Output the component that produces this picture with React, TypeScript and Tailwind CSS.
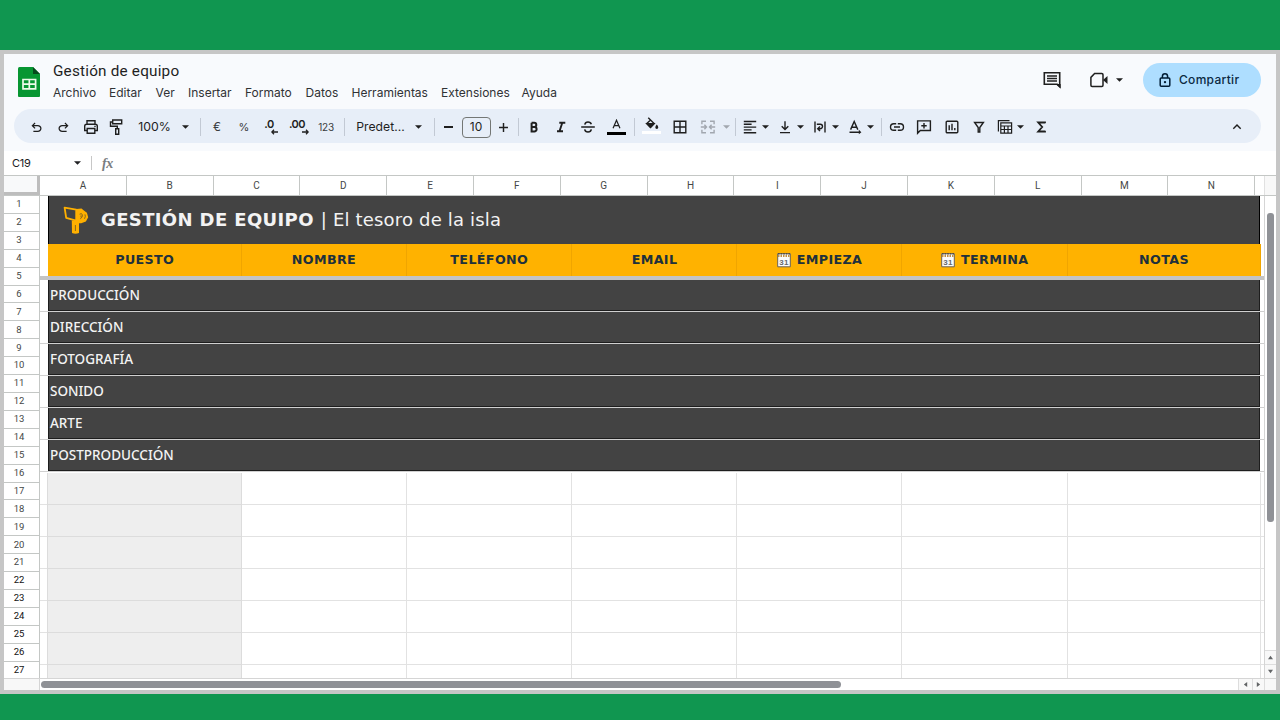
import type { ReactNode } from "react";

type P = { children?: ReactNode; className?: string };

function Sym({ d, className = "w-4 h-4" }: { d: string; className?: string }) {
  return (
    <svg viewBox="0 -960 960 960" className={`${className} shrink-0`} fill="currentColor">
      <path d={d} />
    </svg>
  );
}

function Line({ children, className = "w-4 h-4" }: P) {
  return (
    <svg viewBox="0 0 16 16" className={`${className} shrink-0`} fill="none" stroke="currentColor" strokeWidth="1.4">
      {children}
    </svg>
  );
}

function Cell({ children, className = "" }: P) {
  return <div className={`flex h-full shrink-0 items-center justify-center pt-[2px] whitespace-nowrap ${className}`}>{children}</div>;
}

function Caret() {
  return (
    <svg viewBox="0 0 8 4" className="h-[4px] w-[7px] shrink-0" fill="currentColor">
      <path d="M0 0h8L4 4z" />
    </svg>
  );
}

function Sep() {
  return <div className="h-[18px] w-px bg-[#c2c9d4]" />;
}

const undo =
  "M280-200v-80h284q63 0 109.5-40T720-420q0-60-46.5-100T564-560H312l104 104-56 56-200-200 200-200 56 56-104 104h252q97 0 167 63t70 157q0 94-70 157t-167 63H280Z";

function Decimals({ text, right }: { text: string; right?: boolean }) {
  return (
    <div className="flex flex-col items-end">
      <span className="pr-[2px] text-[11px] leading-[9px] font-semibold tracking-[-0.5px]">{text}</span>
      <svg viewBox="0 0 7 6" className="mr-[-2px] h-[6px] w-[7px]" fill="none" stroke="currentColor" strokeWidth="1.3">
        {right ? <path d="M0 3h6M4 .8 6.2 3 4 5.2" /> : <path d="M7 3H1M3 .8.8 3 3 5.2" />}
      </svg>
    </div>
  );
}

function Toolbar() {
  return (
    <div className="ml-[10px] flex h-[34px] w-[1247px] items-center rounded-full bg-[#e7eef8] pl-2 text-[12px] text-[#1f1f1f]">
      <Cell className="w-[28px]"><Sym d={undo} className="h-[15px] w-[15px]" /></Cell>
      <Cell className="w-[26px]"><Sym d={undo} className="h-[15px] w-[15px] -scale-x-100" /></Cell>
      <Cell className="w-[30px]">
        <Line><path d="M4 5V1.8h8V5M4 11.5H1.7V7.2Q1.7 5.2 3.7 5.2h8.6q2 0 2 2v4.3H12M4.2 9.5h7.6v4.7H4.2z" /><path d="M11.3 7.4h1.4" /></Line>
      </Cell>
      <Cell className="w-[22px]">
        <Line><path d="M3.7 1h9v3.8h-9zM3.7 3H1.5v4.2h6.8v2.6M6.7 9.8h3v5.4h-3z" /></Line>
      </Cell>
      <Cell className="w-[53px] pt-[3px] text-[12.3px]">100%</Cell>
      <Cell className="w-[8px]"><Caret /></Cell>
      <Cell className="w-[23px]"><Sep /></Cell>
      <Cell className="w-[10px] text-[12px] text-[#3a3c40]">€</Cell>
      <Cell className="w-[44px] pt-[3px] text-[11px] text-[#3a3c40]">%</Cell>
      <Cell className="w-[8px]"><Decimals text=".0" /></Cell>
      <Cell className="w-[48px]"><Decimals text=".00" right /></Cell>
      <Cell className="w-[8px] text-[10px] tracking-[-0.2px] text-[#3a3c40]">123</Cell>
      <Cell className="w-[28px]"><Sep /></Cell>
      <Cell className="w-[45px] pt-[3px] text-[12.2px]">Predet...</Cell>
      <Cell className="w-[30px]"><Caret /></Cell>
      <Cell className="w-[3px]"><Sep /></Cell>
      <Cell className="w-[24px]"><div className="h-[1.5px] w-[9px] bg-[#1f1f1f]" /></Cell>
      <Cell className="w-[32px]">
        <div className="flex h-[21px] w-[29px] items-center justify-center rounded-[4px] border border-[#747775] text-[12px]">10</div>
      </Cell>
      <Cell className="w-[22px]"><Line className="h-[11px] w-[11px]"><path strokeWidth="2.1" d="M8 1.5v13M1.5 8h13" /></Line></Cell>
      <Cell className="w-[8px]"><Sep /></Cell>
      <Cell className="w-[24px]">
        <Line><path strokeWidth="2" d="M5.6 3.8v8.6h2.8a2.2 2.2 0 0 0 0-4.4H5.6M5.6 3.8h2.6a2.1 2.1 0 0 1 0 4.2" /></Line>
      </Cell>
      <Cell className="w-[30px]"><Line><path strokeWidth="1.9" d="M6.3 3.8h6M4 12.3h6M9.3 3.8l-2.8 8.5" /></Line></Cell>
      <Cell className="w-[24px]">
        <Line><path strokeWidth="1.5" d="M1.2 8h13.6M11.3 5.3Q10.7 3.1 8 3.1T4.8 5.7M4.7 10.3Q5.2 13 8 13t3.3-2.7" /></Line>
      </Cell>
      <Cell className="w-[32px] flex-col">
        <Line className="h-[11px] w-[11px]"><path strokeWidth="1.8" d="M3 13.4 8 1.8l5 11.6M4.7 9.8h6.6" /></Line>
        <div className="mt-[2px] h-[3px] w-[19px] bg-black" />
      </Cell>
      <Cell className="w-[4px]"><Sep /></Cell>
      <Cell className="w-[30px] flex-col">
        <svg viewBox="0 0 16 14" className="mt-[-3px] h-[13px] w-[15px]" fill="none" stroke="currentColor" strokeWidth="1.5">
          <path d="m4.5.8 6.3 6.3-3.9 4-4-4L7 3.2" />
          <path d="M3 7.2h7.7l-3.8 4z" fill="currentColor" />
          <path d="M13.7 8.2q1.6 2 1.6 3a1.6 1.6 0 0 1-3.2 0q0-1 1.6-3z" fill="currentColor" stroke="none" />
        </svg>
        <div className="mt-[1px] h-[3px] w-[19px] bg-white" />
      </Cell>
      <Cell className="w-[28px]"><Line><path d="M2.2 2.2h11.6v11.6H2.2zM8 2.2v11.6M2.2 8h11.6" /></Line></Cell>
      <Cell className="w-[28px] text-[#a2a7af]">
        <Line><path d="M6 2.2H1.9v3M10 2.2h4.1v3M6 13.8H1.9v-3M10 13.8h4.1v-3M0.8 8H6M10 8h5.2M4.4 5.8 6.5 8l-2.1 2.2M11.6 5.8 9.5 8l2.1 2.2" /></Line>
      </Cell>
      <Cell className="w-[8px] text-[#a2a7af]"><Caret /></Cell>
      <Cell className="w-[10px]"><Sep /></Cell>
      <Cell className="w-[20px]"><Line><path d="M1.8 2.5h12.4M1.8 5.3h7.8M1.8 8.1h12.4M1.8 10.9h7.8M1.8 13.7h12.4" /></Line></Cell>
      <Cell className="w-[10px]"><Caret /></Cell>
      <Cell className="ml-1 w-[22px]"><Line><path d="M8 2.3v7.9M4.7 7.2 8 10.5l3.3-3.3M3 13.6h10" /></Line></Cell>
      <Cell className="w-[8px]"><Caret /></Cell>
      <Cell className="ml-2 w-[16px]">
        <Line><path strokeWidth="1.4" d="M3 2.5v11M13 2.5v11M4.8 5.3h3.5a2.2 2.2 0 0 1 0 4.4H6M8 7.4 5.7 9.7 8 12" /></Line>
      </Cell>
      <Cell className="w-[15px]"><Caret /></Cell>
      <Cell className="w-[24px]">
        <Line><path d="M3.6 10.6 7.2 2.4l3.6 8.2M4.8 8.2h4.8M2.5 13.3h10" /><path d="m11.8 10.7 2.6 2.6-2.6 1.9z" fill="currentColor" stroke="none" /></Line>
      </Cell>
      <Cell className="w-[7px]"><Caret /></Cell>
      <Cell className="w-[14px]"><Sep /></Cell>
      <Cell className="w-[18px]"><Line><path d="M7.2 4.7H4.8a3.3 3.3 0 0 0 0 6.6h2.4M8.8 4.7h2.4a3.3 3.3 0 0 1 0 6.6H8.8M5 8h6" /></Line></Cell>
      <Cell className="w-[36px]"><Line><path d="M1.6 14.2V1.9h12.8v9.6H4.3zM8 4v5.4M5.3 6.7h5.4" /></Line></Cell>
      <Cell className="w-[20px]"><Line><rect x="2.2" y="2.2" width="11.6" height="11.6" rx="1" /><path d="M5.2 6.3v5M8 4.8v6.5M10.8 9v2.3" /></Line></Cell>
      <Cell className="w-[34px]"><Line><path d="M3.6 3.5h8.8L8.8 8.5v4.5H7.2V8.5z" /></Line></Cell>
      <Cell className="w-[18px]">
        <Line><path strokeWidth="1.2" d="M3.8 3.9h10.8v10.2H3.8zM3.8 7h10.8M3.8 10.5h10.8M7.4 7v7.1M11 7v7.1M12.5 1.6H1.4v10.9" /></Line>
      </Cell>
      <Cell className="w-[12px]"><Caret /></Cell>
      <Cell className="w-[30px]"><Line><path strokeWidth="1.8" d="M12 4.3v-.8H5.2L9.2 8l-4 4.5H12v-.8" /></Line></Cell>
      <Cell className="mr-3 ml-auto w-[24px]"><Line><path d="M4.3 9.8 8 6.1l3.7 3.7" /></Line></Cell>
    </div>
  );
}

function Header() {
  return (
    <div className="flex h-[97px] shrink-0 flex-col bg-[#f8fafd]">
      <div className="flex h-[55px] text-[#1f1f1f]">
        <svg viewBox="0 0 22 30" className="mt-[13px] ml-[14px] h-[30px] w-[22px] shrink-0">
          <path d="M1.5 0H15l7 7v22q0 1-1 1H1q-1 0-1-1V1.5Q0 0 1.5 0z" fill="#079632" />
          <path d="m15 0 7 7h-7z" fill="#06491c" />
          <path d="M5 12.5h12.6v9.4H5zM5 17.2h12.6M11.3 12.5v9.4" fill="none" stroke="#eefbea" strokeWidth="1.7" />
        </svg>
        <div className="ml-[13px] flex flex-col">
          <div className="mt-[7px] h-[21px] font-['Roboto',sans-serif] text-[15.3px] leading-[21px] tracking-[0.2px] whitespace-nowrap">Gestión de equipo</div>
          <div className="mt-[2px] flex text-[12px] leading-[18px] text-[#303235]">
            <span className="w-[56px]">Archivo</span>
            <span className="w-[46.5px]">Editar</span>
            <span className="w-[32.5px]">Ver</span>
            <span className="w-[57px]">Insertar</span>
            <span className="w-[60.5px]">Formato</span>
            <span className="w-[46px]">Datos</span>
            <span className="w-[89.5px]">Herramientas</span>
            <span className="w-[80.5px]">Extensiones</span>
            <span>Ayuda</span>
          </div>
        </div>
        <div className="mr-[15px] ml-auto flex h-[51px] items-center">
          <svg viewBox="0 0 18 18" className="mr-[29px] h-[18px] w-[18px]" fill="none" stroke="currentColor" strokeWidth="1.6">
            <path d="M1.3 1.7h15.4v14l-2.5-2.4H1.3z" />
            <path d="M17.6 13v4.6L13 13z" fill="currentColor" stroke="none" />
            <path strokeWidth="1.5" d="M4 4.9h10M4 7.5h10M4 10.1h10" />
          </svg>
          <svg viewBox="0 0 18 16" className="mr-[8px] h-[16px] w-[18px]" fill="none" stroke="currentColor" strokeWidth="1.5">
            <path d="M4.6 1.6h7.2q1.2 0 1.2 1.2v10.4q0 1.2-1.2 1.2H2.1q-1.2 0-1.2-1.2V5.4z" />
            <path d="m13 8 4.5-4v8z" fill="currentColor" stroke="none" />
          </svg>
          <Caret />
          <div className="ml-[20px] flex h-[34px] w-[118px] items-center rounded-full bg-[#aedeff] pl-[16px]">
            <svg viewBox="0 0 12 14" className="h-[14px] w-[12px]" fill="none" stroke="#001d35" strokeWidth="1.5">
              <rect x="1.2" y="5" width="9.6" height="8.2" rx="1" />
              <path d="M3.4 5V3.4a2.6 2.6 0 0 1 5.2 0V5" />
              <circle cx="6" cy="9.1" r="1.2" fill="#001d35" stroke="none" />
            </svg>
            <span className="ml-[8px] text-[12px] font-medium tracking-[0.3px] text-[#0b2942]">Compartir</span>
          </div>
        </div>
      </div>
      <Toolbar />
    </div>
  );
}

function FormulaBar() {
  return (
    <div className="flex h-[24px] shrink-0 items-center bg-white pl-[8px] text-[11px] text-[#202124]">
      <span className="w-[62px] tracking-[-0.3px]">C19</span>
      <Caret />
      <div className="ml-[10px] h-[14px] w-px bg-[#c7c7c7]" />
      <span className="ml-[10px] font-['Liberation_Serif',serif] text-[14px] font-bold tracking-[-0.5px] text-[#7a7d80] italic">fx</span>
    </div>
  );
}

const columns = "ABCDEFGHIJKLMN".split("");

function ColumnHeads() {
  return (
    <div className="flex h-[21px] shrink-0 border-y border-[#c4c7c5] bg-white font-['Roboto',sans-serif] text-[10px] text-[#444746]">
      <div className="h-[19px] w-[36px] shrink-0 border-r-[3px] border-b-[3px] border-[#bdbdbd] bg-[#f8f9fa]" />
      {columns.map((c) => (
        <div key={c} className="flex w-[86.8px] shrink-0 items-center justify-center border-r border-[#c4c7c5]">{c}</div>
      ))}
      <div className="ml-auto w-[12px] border-l border-[#e1e1e1] bg-[#f8f8f8]" />
    </div>
  );
}

function RowHeads() {
  return (
    <div className="w-[36px] shrink-0 overflow-hidden border-r border-[#c4c7c5] bg-white font-['Roboto',sans-serif] text-[9.5px] text-[#444746]">
      {Array.from({ length: 27 }, (_, i) => (
        <div key={i} className={`flex h-[17.92px] items-center justify-center border-b border-[#c4c7c5] pr-[5px] ${i > 20 ? "text-[#111111]" : ""}`}>
          {i + 1}
        </div>
      ))}
    </div>
  );
}

function Calendar() {
  return (
    <svg viewBox="0 0 14 15" className="mr-[6px] h-[15px] w-[14px]">
      <path d="M.7.7h12.6v13.1H.7z" fill="#fbfbfb" stroke="#6a6253" />
      <path d="M1 3h12" stroke="#c08f42" strokeWidth="2" strokeDasharray="1.5 1" />
      <path d="M1 .8h12" stroke="#514b42" strokeWidth="1.4" strokeDasharray="1.6 1" />
      <text x="7" y="11.8" textAnchor="middle" fontSize="8" fill="#65686c" fontFamily="Liberation Sans">31</text>
    </svg>
  );
}

function Banner() {
  return (
    <div className="mr-px flex h-[47.5px] shrink-0 items-center border-x border-black bg-[#434343] font-['DejaVu_Sans',sans-serif] text-[18px] text-[#f3f3f3]">
      <svg viewBox="0 0 26 28" className="ml-[14px] h-[28px] w-[26px] shrink-0">
        <path d="M11 3.2 18.5 2.6l2.4 2 3 2.2 1.3 4.4-2.3 4.2-4.7 1.9H11z" fill="#ffb000" />
        <path d="M8.8 14.5h7.2V27q-3.6 1.6-7 0z" fill="#ffb000" />
        <path d="m1.6 1.7 11.6 2v11L3.2 11.9z" fill="#434343" stroke="#ffb000" strokeWidth="1.8" strokeLinejoin="round" />
        <path d="M16.6 8.2q2.4-1.5 2.8.8t-2.2 3.9M18 9.4v2M22 8.4q.9 2.2-.5 4.4M12.4 19v6" fill="none" stroke="#6b5626" strokeWidth=".8" />
      </svg>
      <div className="ml-[12px] whitespace-nowrap">
        <span className="font-bold tracking-[0.37px]">GESTIÓN DE EQUIPO</span>
        <span className="ml-[1px] tracking-[0.18px]"> | El tesoro de la isla</span>
      </div>
    </div>
  );
}

const widths = ["w-[193.5px]", "w-[165px]", "w-[165.5px]", "w-[165px]", "w-[165px]", "w-[165.5px]", "w-[193px]"];
const titles = ["PUESTO", "NOMBRE", "TELÉFONO", "EMAIL", "EMPIEZA", "TERMINA", "NOTAS"];
const groups = ["PRODUCCIÓN", "DIRECCIÓN", "FOTOGRAFÍA", "SONIDO", "ARTE", "POSTPRODUCCIÓN"];

function Sheet() {
  return (
    <div className="flex h-full w-[1225px] shrink-0 flex-col overflow-hidden border-r border-[#d5d5d5] bg-white">
      <div className="ml-[8px] flex w-[1213px] shrink-0 flex-col">
        <Banner />
        <div className="flex h-[32px] bg-[#ffb200] font-['DejaVu_Sans',sans-serif] text-[12.7px] font-bold tracking-[0.36px] text-[#20303c]">
          {titles.map((t, i) => (
            <div key={t} className={`flex shrink-0 items-center justify-center border-r border-[#f0a500] pt-px pl-px ${widths[i]}`}>
              {(i === 4 || i === 5) && <Calendar />}
              {t}
            </div>
          ))}
        </div>
      </div>
      <div className="h-[4.5px] shrink-0 bg-[#c4c4c4]" />
      {groups.map((g) => (
        <div key={g} className="flex h-[32px] shrink-0 border-b border-[#d0d0d0] pr-[4px] pl-[8px]">
          <div className="flex flex-1 items-center border border-t-0 border-[#1d1d1d] bg-[#434343] pt-px pl-[1px] font-['Noto_Sans',sans-serif] text-[13.5px] font-medium text-[#f3f3f3]">
            {g}
          </div>
        </div>
      ))}
      <div className="flex shrink-0 flex-col pt-px">
        {Array.from({ length: 7 }, (_, r) => (
          <div key={r} className="flex h-[32px] shrink-0 border-b border-[#e2e2e2] pl-[7px]">
            {widths.map((w, i) =>
              i === 0 ? (
                <div key={i} className="-mb-px w-[194.9px] shrink-0 border border-t-0 border-[#dcdcdc] bg-[#eeeeee]" />
              ) : (
                <div key={i} className={`shrink-0 border-r border-[#e2e2e2] ${w}`} />
              ),
            )}
          </div>
        ))}
      </div>
    </div>
  );
}

function Tick({ className = "" }: P) {
  return (
    <svg viewBox="0 0 6 6" className={`h-[5px] w-[5px] ${className}`} fill="#626466">
      <path d="M0 5h6L3 1z" />
    </svg>
  );
}

export default function App() {
  return (
    <div className="h-[720px] w-[1280px] overflow-hidden bg-[#109650] pt-[50px] font-['Inter',sans-serif]">
      <div className="flex h-[643.5px] flex-col border-4 border-[#c6c6c6] bg-white">
        <Header />
        <FormulaBar />
        <ColumnHeads />
        <div className="flex h-[482px] shrink-0">
          <RowHeads />
          <Sheet />
          <div className="flex flex-1 flex-col items-center">
            <div className="mt-[17px] h-[309px] w-[7px] rounded-[3px] bg-[#8f9196]" />
            <div className="mt-auto flex h-[14px] w-full items-center justify-center border-t border-[#dddddd] bg-[#f8f8f8]"><Tick /></div>
            <div className="flex h-[14px] w-full items-center justify-center border-t border-[#dddddd] bg-[#f8f8f8]"><Tick className="rotate-180" /></div>
          </div>
        </div>
        <div className="flex flex-1 items-stretch border-t border-[#d5d5d5]">
          <div className="w-[36px] border-r border-[#d5d5d5] bg-[#f8f8f8]" />
          <div className="mt-[2px] ml-[1px] h-[7px] w-[800px] rounded-full bg-[#8f9196]" />
          <div className="ml-auto flex w-[14px] items-center justify-center border-l border-[#dddddd] bg-[#f8f8f8]"><Tick className="-rotate-90" /></div>
          <div className="flex w-[13px] items-center justify-center border-x border-[#dddddd] bg-[#f8f8f8]"><Tick className="rotate-90" /></div>
          <div className="w-[11px] bg-[#f8f8f8]" />
        </div>
      </div>
    </div>
  );
}
